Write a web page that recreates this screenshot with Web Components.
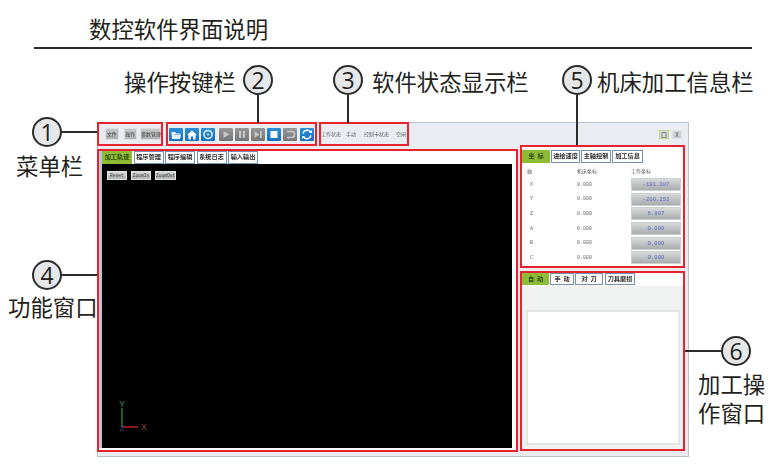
<!DOCTYPE html>
<html lang="zh">
<head>
<meta charset="utf-8">
<title>数控软件界面说明</title>
<style>
  html, body { margin: 0; background: #fff; }
  body { width: 784px; height: 474px; overflow: hidden; font-family: "Noto Sans CJK SC", "Noto Sans", sans-serif; }
  #page { position: relative; width: 784px; height: 474px; }
</style>
</head>
<body>
<div id="page">
  <doc-title>数控软件界面说明</doc-title>

  <cnc-window>
    <win-pane slot="menu" style="width:66px">
      <menu-btn w="14" style="margin-left:6px">文件</menu-btn>
      <menu-btn w="14" style="margin-left:5px">操作</menu-btn>
      <menu-btn w="21" style="margin-left:3px">参数管理</menu-btn>
    </win-pane>
    <win-pane slot="tools" style="width:151px">
      <tool-icon kind="folder" style="margin-left:1px"></tool-icon>
      <tool-icon kind="home"></tool-icon>
      <tool-icon kind="disc"></tool-icon>
      <tool-icon kind="play" off style="margin-left:2px"></tool-icon>
      <tool-icon kind="pause" off></tool-icon>
      <tool-icon kind="next" off></tool-icon>
      <tool-icon kind="stop"></tool-icon>
      <tool-icon kind="undo" off></tool-icon>
      <tool-icon kind="refresh" style="margin-left:1px"></tool-icon>
    </win-pane>
    <win-pane slot="status" style="width:90px">
      <status-text>工作状态</status-text>
      <status-text style="margin-left:5px">手动</status-text>
      <status-text style="margin-left:8px">控制卡状态</status-text>
      <status-text style="margin-left:7px">空闲</status-text>
    </win-pane>

    <func-pane slot="func"></func-pane>

    <info-pane slot="info"></info-pane>
    <op-pane slot="op"></op-pane>
  </cnc-window>

  <call-out n="1" dir="right" len="35" style="left:32px;top:117px"></call-out>
  <call-out n="2" dir="down" len="28" style="left:243px;top:65px"></call-out>
  <call-out n="3" dir="down" len="28" style="left:333px;top:65px"></call-out>
  <call-out n="4" dir="right" len="35" style="left:32px;top:260px"></call-out>
  <call-out n="5" dir="down" len="50" style="left:562px;top:65px"></call-out>
  <call-out n="6" dir="left" len="36" style="left:721px;top:336px"></call-out>

  <doc-label style="left:124px;top:70px">操作按键栏</doc-label>
  <doc-label style="left:372px;top:70px">软件状态显示栏</doc-label>
  <doc-label style="left:597px;top:70px">机床加工信息栏</doc-label>
  <doc-label style="left:16px;top:154px">菜单栏</doc-label>
  <doc-label style="left:8px;top:295px">功能窗口</doc-label>
  <doc-label style="left:698px;top:372px">加工操</doc-label>
  <doc-label style="left:698px;top:401px">作窗口</doc-label>
</div>

<script>
// little helper, every element below is just a template string in a shadow root
function shadow(el, html) {
  const root = el.attachShadow({ mode: 'open' });
  root.innerHTML = html;
  return root;
}

class DocTitle extends HTMLElement {
  constructor() {
    super();
    shadow(this, `
      <style>
        :host { display: block; margin: 0 32px 0 34px; height: 47px; padding-left: 55px; border-bottom: 2px solid #2b2b2b; }
        div { font-size: 22.4px; line-height: 56px; height: 47px; color: #231f20; }
      </style>
      <div><slot></slot></div>`);
  }
}

class DocLabel extends HTMLElement {
  constructor() {
    super();
    shadow(this, `
      <style>
        :host { position: absolute; display: block; font-size: 22.4px; line-height: 22px; color: #231f20; white-space: nowrap; }
      </style>
      <slot></slot>`);
  }
}

class CallOut extends HTMLElement {
  constructor() {
    super();
    const n = this.getAttribute('n');
    const dir = this.getAttribute('dir');
    const len = this.getAttribute('len');
    const lines = {
      right: `left:30px;top:14px;width:${len}px;height:2px`,
      left: `right:30px;top:14px;width:${len}px;height:2px`,
      down: `left:14px;top:30px;width:2px;height:${len}px`,
    };
    shadow(this, `
      <style>
        :host { position: absolute; display: block; width: 30px; height: 30px; }
        .ring { width: 30px; height: 30px; box-sizing: border-box; border: 2px solid #2b2b2b; border-radius: 50%;
                background: #e6e7e8; color: #231f20; font: 23px/27px "Open Sans", sans-serif; text-align: center; }
        .line { position: absolute; background: #2b2b2b; ${lines[dir]} }
      </style>
      <div class="line"></div>
      <div class="ring">${n}</div>`);
  }
}

class CncWindow extends HTMLElement {
  constructor() {
    super();
    shadow(this, `
      <style>
        :host { display: block; width: 592px; height: 335px; margin: 73px 0 0 97px; box-sizing: border-box;
                background: #e9edf1; box-shadow: inset 0 0 0 1px #b7c2ca; padding: 0 4px 5px 0; filter: blur(.45px); }
        .grid { display: grid; height: 100%; grid-template-columns: 421px 165px; column-gap: 2px; grid-template-rows: 23px 1fr; }
        .top { grid-column: 1 / 3; display: flex; align-items: flex-start; }
        .gap3 { margin-left: 3px; }
        .gap2 { margin-left: 2px; }
        .winbtns { margin-left: auto; display: flex; gap: 3px; padding: 8px 3px 0 0; }
        .winbtns span { width: 10px; height: 9px; box-sizing: border-box; background: #cfd3d3; border: 1px solid #dfe3e3;
                        font: 6px/7px "Noto Sans CJK SC", sans-serif; text-align: center; color: #555; }
        .winbtns span:first-child { border-color: #c7d68a; }
        .left { padding-top: 4px; min-height: 0; display: flex; }
        .right { display: flex; flex-direction: column; gap: 3px; min-height: 0; }
      </style>
      <div class="grid">
        <div class="top">
          <slot name="menu"></slot>
          <div class="gap3"><slot name="tools"></slot></div>
          <div class="gap2"><slot name="status"></slot></div>
          <div class="winbtns"><span>口</span><span>X</span></div>
        </div>
        <div class="left"><slot name="func"></slot></div>
        <div class="right"><slot name="info"></slot><slot name="op"></slot></div>
      </div>`);
  }
}

class WinPane extends HTMLElement {
  constructor() {
    super();
    shadow(this, `
      <style>
        :host { display: flex; align-items: center; height: 24px; box-sizing: border-box; border: 2px solid #e8222e; }
      </style>
      <slot></slot>`);
  }
}

class MenuBtn extends HTMLElement {
  constructor() {
    super();
    const w = this.getAttribute('w');
    shadow(this, `
      <style>
        :host { display: block; width: ${w}px; height: 12px; box-sizing: border-box; border: 1px solid #dcdede;
                background: linear-gradient(#c4c7c7, #b0b3b3); font-size: 5px; line-height: 10px; text-align: center; color: #444; white-space: nowrap; }
      </style>
      <slot></slot>`);
  }
}

const ICONS = {
  folder: '<path d="M2.5 4h3.5l1 1.5h4.5v1H5l-1 4.5H3z" fill="#fff"/><path d="M4.5 7H12l-1 4H3.5z" fill="#dff0fb"/>',
  home: '<path d="M7 2.5l5 4.5h-1.5v4.5H8.2V8.5H5.8v3H3.5V7H2z" fill="#fff"/>',
  disc: '<circle cx="7" cy="6.5" r="4" fill="none" stroke="#dff0fb" stroke-width="1.6"/><circle cx="7" cy="6.5" r="1.2" fill="#9fd0f0"/>',
  play: '<path d="M4.5 3l6 3.5-6 3.5z" fill="#c4c4c4"/>',
  pause: '<path d="M4 3h2.2v7H4zM7.8 3H10v7H7.8z" fill="#c4c4c4"/>',
  next: '<path d="M3.5 3l5 3.5-5 3.5zM9 3h1.8v7H9z" fill="#c4c4c4"/>',
  stop: '<rect x="3.5" y="3" width="7" height="7" fill="#fff"/>',
  undo: '<path d="M4 3.5h4.5a3 3 0 010 6H5" fill="none" stroke="#c4c4c4" stroke-width="1.7"/><path d="M5.5 8l-2 1.5 2 1.5z" fill="#c4c4c4"/>',
  refresh: '<path d="M3 5.5A4.2 4.2 0 0110.5 4" fill="none" stroke="#fff" stroke-width="1.5"/><path d="M11 7.5A4.2 4.2 0 013.5 9" fill="none" stroke="#fff" stroke-width="1.5"/><path d="M9 5h3V2zM5 8H2v3z" fill="#fff"/>',
};

class ToolIcon extends HTMLElement {
  constructor() {
    super();
    const off = this.hasAttribute('off');
    const bg = off ? 'linear-gradient(#979797,#757575)' : 'linear-gradient(#2c8fd8,#1670bd)';
    shadow(this, `
      <style>
        :host { display: block; width: 14px; height: 13px; margin-right: 2px; flex: none; border-radius: 1px; background: ${bg}; }
        svg { display: block; }
      </style>
      <svg width="14" height="13" viewBox="0 0 14 13">${ICONS[this.getAttribute('kind')]}</svg>`);
  }
}

class StatusText extends HTMLElement {
  constructor() {
    super();
    shadow(this, `
      <style>:host { display: block; font-size: 5px; line-height: 12px; color: #5f6266; white-space: nowrap; }</style>
      <slot></slot>`);
  }
}

class TabItem extends HTMLElement {
  constructor() {
    super();
    const w = this.getAttribute('w');
    shadow(this, `
      <style>
        :host { display: block; width: ${w}px; box-sizing: border-box; height: 100%; flex: none; border: 1px solid #7391ad;
                border-right-width: 1.5px; background: #fff; color: #2b2b2b; font-size: 6.2px; font-weight: 700;
                line-height: 10px; text-align: center; white-space: nowrap; }
        :host([active]) { background: #8dbb35; border-color: #8dbb35; color: #2f4a10; }
      </style>
      <slot></slot>`);
  }
}

class TabStrip extends HTMLElement {
  constructor() {
    super();
    shadow(this, `
      <style>:host { display: flex; gap: 1px; height: 13px; }</style>
      <slot></slot>`);
  }
}

class ViewBtn extends HTMLElement {
  constructor() {
    super();
    const w = this.getAttribute('w');
    shadow(this, `
      <style>
        :host { display: block; width: ${w}px; height: 9px; box-sizing: border-box; background: linear-gradient(#d6d8d8,#b0b3b3);
                border: 1px solid #e2e4e4; font: 4.6px/7px "Liberation Mono", monospace; text-align: center; color: #333; }
      </style>
      <slot></slot>`);
  }
}

class FuncPane extends HTMLElement {
  constructor() {
    super();
    shadow(this, `
      <style>
        :host { display: flex; flex-direction: column; width: 421px; height: 303px; box-sizing: border-box; border: 2px solid #e8222e; background: #fff; }
        .tabs { padding-left: 3px; background: linear-gradient(90deg, #b9c4d4 3px, #fff 3px); flex: none; }
        tab-strip { gap: 1.5px; }
        .body { flex: 1; display: flex; min-height: 0; padding-bottom: 2px; }
        .strip { width: 3px; background: #b9c4d4; }
        .scene { position: relative; width: 410px; background: #000; padding: 7px 5px; box-sizing: border-box; }
        .btns { display: flex; gap: 4px; }
        svg { position: absolute; left: 12px; bottom: 12px; }
      </style>
      <div class="tabs">
        <tab-strip>
          <tab-item w="30" active>加工轨迹</tab-item>
          <tab-item w="30">程序管理</tab-item>
          <tab-item w="30">程序编辑</tab-item>
          <tab-item w="30">系统日志</tab-item>
          <tab-item w="30">输入输出</tab-item>
        </tab-strip>
      </div>
      <div class="body">
        <div class="strip"></div>
        <div class="scene">
          <div class="btns">
            <view-btn w="20">Reset</view-btn>
            <view-btn w="20">ZoomIn</view-btn>
            <view-btn w="21">ZoomOut</view-btn>
          </div>
          <svg width="50" height="36" viewBox="0 0 50 36">
            <line x1="8" y1="8" x2="8" y2="27" stroke="#2f9e3a" stroke-width="1.2"/>
            <line x1="8" y1="27" x2="24" y2="27" stroke="#e3262c" stroke-width="1.2"/>
            <text x="8" y="7" font-family="Liberation Sans" font-size="9" fill="#2f9e3a" text-anchor="middle">Y</text>
            <text x="30" y="30" font-family="Liberation Sans" font-size="9" fill="#9c4040" text-anchor="middle">X</text>
            <text x="8" y="31" font-family="Liberation Sans" font-size="8" fill="#3a3f9a" text-anchor="middle">Z</text>
          </svg>
        </div>
      </div>`);
  }
}

class CoordRow extends HTMLElement {
  constructor() {
    super();
    const a = this.getAttribute('axis');
    const m = this.getAttribute('machine');
    const w = this.getAttribute('work');
    shadow(this, `
      <style>
        :host { display: grid; grid-template-columns: 50px 54px 50px; height: 13px; align-items: center; font-size: 5px; color: #666; font-family: "Liberation Mono", monospace; }
        .a { padding-left: 3px; }
        .w { height: 13px; box-sizing: border-box; border: 1px solid #ccd0d0; background: linear-gradient(#d8dada,#a9acac);
             text-align: center; line-height: 11px; color: #5468c4; font-size: 5.6px; }
      </style>
      <span class="a">${a}</span><span>${m}</span><span class="w">${w}</span>`);
  }
}

class InfoPane extends HTMLElement {
  constructor() {
    super();
    const rows = [
      ['X', '0.000', '-191.387'],
      ['Y', '0.000', '-200.253'],
      ['Z', '0.000', '6.807'],
      ['A', '0.000', '0.000'],
      ['B', '0.000', '0.000'],
      ['C', '0.000', '0.000'],
    ];
    shadow(this, `
      <style>
        :host { display: block; height: 123px; box-sizing: border-box; border: 2px solid #e8222e; background: #fff; padding: 3px 0 0 0; flex: none; }
        .head { display: grid; grid-template-columns: 50px 54px 50px; height: 15px; padding-left: 5px; font-size: 5px; line-height: 16px; color: #555; }
        .rows { display: flex; flex-direction: column; gap: 1.7px; padding-left: 5px; }
      </style>
      <tab-strip>
        <tab-item w="28" active>坐&nbsp;&nbsp;标</tab-item>
        <tab-item w="29">进给速度</tab-item>
        <tab-item w="30">主轴控制</tab-item>
        <tab-item w="31">加工信息</tab-item>
      </tab-strip>
      <div class="head"><span>轴</span><span>机床坐标</span><span>工作坐标</span></div>
      <div class="rows">${rows.map(r => `<coord-row axis="${r[0]}" machine="${r[1]}" work="${r[2]}"></coord-row>`).join('')}</div>`);
  }
}

class OpPane extends HTMLElement {
  constructor() {
    super();
    shadow(this, `
      <style>
        :host { display: flex; flex-direction: column; height: 180px; box-sizing: border-box; border: 2px solid #e8222e; background: #fff; flex: none; }
        .tabs { padding: 0 0 1px 0; }
        tab-strip { height: 12px; }
        .body { flex: 1; background: #f0f1f1; padding: 24px 3px 4px 4px; display: flex; }
        .sheet { flex: 1; background: #fff; border: 2px solid #e3e6e6; }
      </style>
      <div class="tabs">
        <tab-strip>
          <tab-item w="27" active>自&nbsp;&nbsp;动</tab-item>
          <tab-item w="24">手&nbsp;&nbsp;动</tab-item>
          <tab-item w="28">对&nbsp;&nbsp;刀</tab-item>
          <tab-item w="30" style="margin-left:1px">刀具磨损</tab-item>
        </tab-strip>
      </div>
      <div class="body"><div class="sheet"></div></div>`);
  }
}

customElements.define('doc-title', DocTitle);
customElements.define('doc-label', DocLabel);
customElements.define('call-out', CallOut);
customElements.define('cnc-window', CncWindow);
customElements.define('win-pane', WinPane);
customElements.define('menu-btn', MenuBtn);
customElements.define('tool-icon', ToolIcon);
customElements.define('status-text', StatusText);
customElements.define('tab-item', TabItem);
customElements.define('tab-strip', TabStrip);
customElements.define('view-btn', ViewBtn);
customElements.define('func-pane', FuncPane);
customElements.define('coord-row', CoordRow);
customElements.define('info-pane', InfoPane);
customElements.define('op-pane', OpPane);
</script>
</body>
</html>
